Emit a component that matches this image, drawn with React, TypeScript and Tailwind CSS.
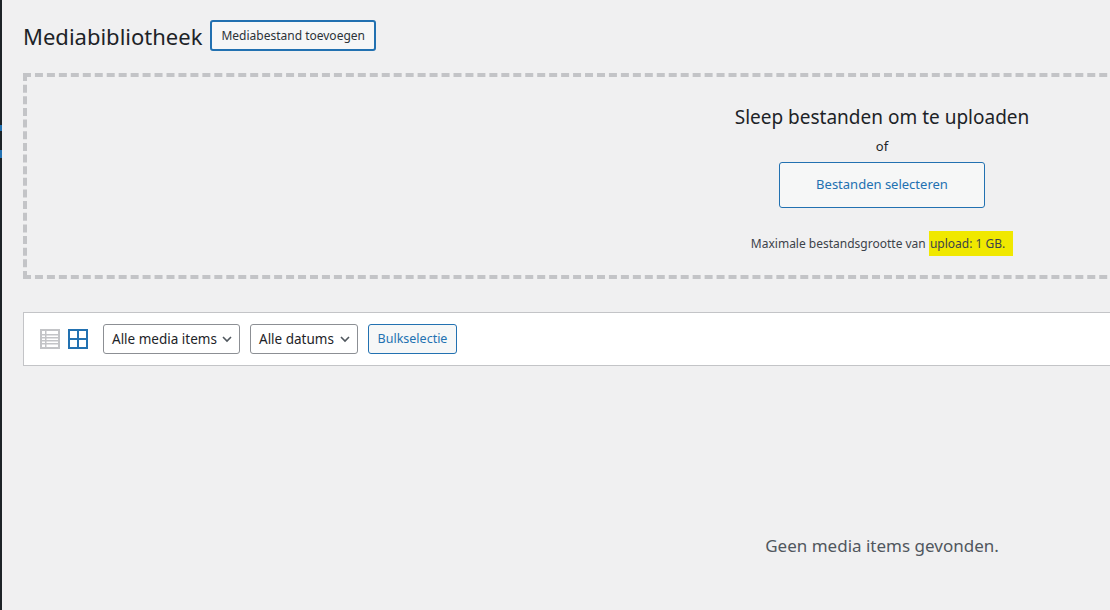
import React from 'react';

export default function App() {
  return (
    <div className="relative w-[1110px] h-[610px] overflow-hidden bg-[#f0f0f1] text-[#1d2327]" style={{ fontFamily: '"Noto Sans", "Liberation Sans", sans-serif' }}>
      <div className="absolute left-0 top-0 w-[2px] h-full bg-[#1d2327]" />
      <div className="absolute left-0 top-[125px] w-[2px] h-[6px] bg-[#2271b1]" />
      <div className="absolute left-0 top-[150px] w-[2px] h-[8px] bg-[#2271b1]" />
      <div className="pl-[23px] w-[1800px]">
        <div className="flex items-center gap-2 pt-[19px] h-[52px]">
          <h1 className="text-[22px] font-normal leading-none">Mediabibliotheek</h1>
          <button className="h-[31px] px-[9px] text-[12px] whitespace-nowrap text-[#2c3338] bg-[#f6f7f7] border-2 border-[#2271b1] rounded-[3px]">Mediabestand toevoegen</button>
        </div>
        <div className="mt-[21px] w-[1718px] h-[206px] border-4 border-dashed border-[#c3c4c7] flex flex-col items-center pt-[27px]">
          <p className="text-[19px] leading-[26px]">Sleep bestanden om te uploaden</p>
          <p className="text-[13px] mt-[7px]">of</p>
          <button className="mt-[5px] w-[206px] h-[46px] text-[13px] text-[#2271b1] bg-[#f6f7f7] border border-[#2271b1] rounded-[3px]">Bestanden selecteren</button>
          <p className="mt-[27px] text-[12px] text-[#3c434a] whitespace-nowrap">Maximale bestandsgrootte van <span className="bg-[#f0e800] px-[1px] pr-[8px] py-[4px]">upload: 1 GB.</span></p>
        </div>
        <div className="mt-[33px] h-[54px] bg-white border border-[#c3c4c7] flex items-center pl-[16px] gap-[8px]">
          <svg width="20" height="20" viewBox="0 0 20 20" className="text-[#c3c4c7]">
            <rect x="1" y="1" width="18" height="18" fill="none" stroke="currentColor" strokeWidth="2" />
            {[5, 8, 11, 14].map(y => <rect key={y} x="1" y={y} width="18" height="1.5" fill="currentColor" />)}
            <rect x="5" y="1" width="1.5" height="18" fill="currentColor" />
          </svg>
          <svg width="20" height="20" viewBox="0 0 20 20" className="text-[#2271b1]">
            <rect x="1" y="1" width="18" height="18" fill="none" stroke="currentColor" strokeWidth="2" />
            <rect x="9" y="1" width="2" height="18" fill="currentColor" />
            <rect x="1" y="9" width="18" height="2" fill="currentColor" />
          </svg>
          <div className="ml-[7px] h-[30px] w-[137px] border border-[#8c8f94] rounded-[3px] flex items-center justify-between pl-[8px] pr-[6px] text-[13.5px] whitespace-nowrap">
            <span>Alle media items</span>
            <svg width="12" height="12" viewBox="0 0 12 12"><path d="M2 4l4 4 4-4" fill="none" stroke="#50575e" strokeWidth="1.6" /></svg>
          </div>
          <div className="ml-[2px] h-[30px] w-[108px] border border-[#8c8f94] rounded-[3px] flex items-center justify-between pl-[8px] pr-[6px] text-[13.5px] whitespace-nowrap">
            <span>Alle datums</span>
            <svg width="12" height="12" viewBox="0 0 12 12"><path d="M2 4l4 4 4-4" fill="none" stroke="#50575e" strokeWidth="1.6" /></svg>
          </div>
          <button className="ml-[2px] h-[30px] w-[89px] text-[12.5px] text-[#2271b1] bg-[#f6f7f7] border border-[#2271b1] rounded-[3px]">Bulkselectie</button>
        </div>
        <div className="w-[1718px] flex justify-center mt-[167px]">
          <p className="text-[17px] text-[#50575e]">Geen media items gevonden.</p>
        </div>
      </div>
    </div>
  );
}
